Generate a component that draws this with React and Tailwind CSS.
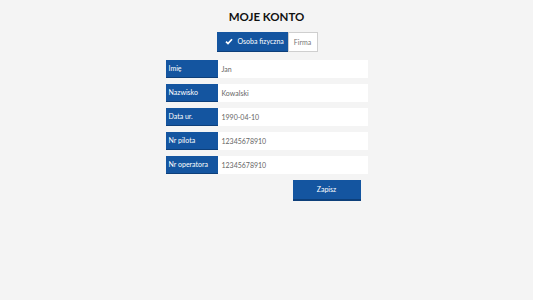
import React from "react";

const rows = [
  ["Imię", "Jan"],
  ["Nazwisko", "Kowalski"],
  ["Data ur.", "1990-04-10"],
  ["Nr pilota", "12345678910"],
  ["Nr operatora", "12345678910"],
];

export default function App() {
  return (
    <div className="w-[533px] h-[300px] bg-[#f4f4f4] flex flex-col items-center" style={{ fontFamily: "Lato, 'Open Sans', sans-serif" }}>
      <h1 className="mt-[10px] text-[11.5px] leading-[14px] font-bold text-[#111]">MOJE KONTO</h1>
      <div className="mt-[8px] flex h-[20px] ml-[1px]">
        <div className="w-[71px] bg-[#1455a0] border-b border-[#0d3f7a] flex items-center pl-[8px] gap-[5px] text-white text-[7px] whitespace-nowrap overflow-hidden">
          <svg width="8" height="7" viewBox="0 0 8 7" className="shrink-0"><path d="M1 3.6 L3 5.6 L7 1.2" stroke="white" strokeWidth="1.7" fill="none" /></svg>
          <span>Osoba fizyczna</span>
        </div>
        <div className="w-[30px] bg-white border border-[#cfcfcf] flex items-center justify-center text-[#777] text-[7px]">Firma</div>
      </div>
      <div className="mt-[8px] w-[202px] flex flex-col gap-[6px]">
        {rows.map(([l, v]) => (
          <div key={l} className="flex h-[18px]">
            <div className="w-[52px] bg-[#1455a0] border-b border-[#0d3f7a] text-white text-[7px] flex items-center pl-[3px] whitespace-nowrap">{l}</div>
            <div className="flex-1 bg-white text-[#666] text-[7px] flex items-center pl-[4px]">{v}</div>
          </div>
        ))}
        <div className="flex justify-end pr-[7px]">
          <button className="w-[68px] h-[21px] bg-[#1455a0] border-b-2 border-[#0d3f7a] text-white text-[7px]">Zapisz</button>
        </div>
      </div>
    </div>
  );
}
